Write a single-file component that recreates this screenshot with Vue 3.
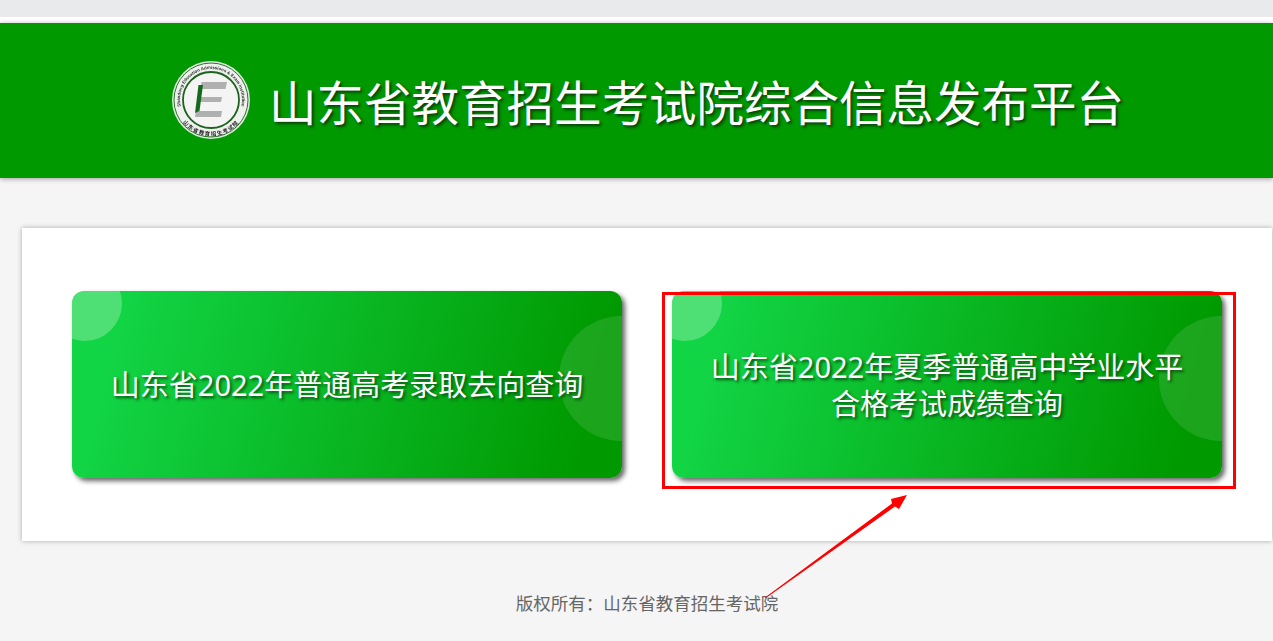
<script setup>
const title = '山东省教育招生考试院综合信息发布平台'
const links = [
  { id: 1, lines: ['山东省2022年普通高考录取去向查询'] },
  { id: 2, lines: ['山东省2022年夏季普通高中学业水平', '合格考试成绩查询'] }
]
</script>

<template>
  <div class="page">
    <div class="topstrip"></div>
    <div class="topgap"></div>
    <header class="banner">
      <svg class="logo" viewBox="0 0 80 80" width="80" height="80" aria-hidden="true">
        <defs>
          <path id="arcTop" d="M 13.2 55.5 A 31 31 0 1 1 66.8 55.5" />
          <path id="arcBottom" d="M 10.5 60.6 A 36 36 0 0 0 69.5 60.6" />
          <filter id="soft" x="-5%" y="-5%" width="110%" height="110%">
            <feGaussianBlur stdDeviation="0.35" />
          </filter>
        </defs>
        <g filter="url(#soft)">
          <circle cx="40" cy="40" r="39" fill="#dfe8df" />
          <circle cx="40" cy="40" r="37" fill="#eef1ee" stroke="#2f752f" stroke-width="1" />
          <circle cx="40" cy="40" r="28" fill="#f4f4f4" stroke="#1a631a" stroke-width="1.8" />
          <text class="ring-en"><textPath href="#arcTop" startOffset="50%" text-anchor="middle">Shandong Education Admissions &amp; Exam Institution</textPath></text>
          <text class="ring-cn"><textPath href="#arcBottom" startOffset="50%" text-anchor="middle">山东省教育招生考试院</textPath></text>
          <polygon points="30.5,22 56,22 54.5,29 29.5,29" fill="#b0b0b0" />
          <polygon points="27.5,37 51,37 50,42 27,42" fill="#b0b0b0" />
          <polygon points="25,51 51,51 50,57 24,57" fill="#b0b0b0" />
          <polygon points="27.5,25 32,25 28.5,51 24,53" fill="#17681f" />
        </g>
      </svg>
      <h1 class="title">{{ title }}</h1>
    </header>

    <main class="panel">
      <a v-for="link in links" :key="link.id" class="tile">
        <span class="bubble-a"></span>
        <span class="bubble-b"></span>
        <span class="tile-text">
          <span v-for="line in link.lines" :key="line" class="tile-line">{{ line }}</span>
        </span>
      </a>
    </main>

    <footer class="foot">版权所有：山东省教育招生考试院</footer>

    <div class="mark-box"></div>
    <svg class="mark-arrow" width="1273" height="641" aria-hidden="true">
      <polygon points="765,597.5 892,503.5 891,499 907,495 899,509 895,506.5 766,598" fill="#ff0000" />
    </svg>
  </div>
</template>

<style>
html, body { margin: 0; background: #f5f5f5; overflow: hidden; }
</style>

<style scoped>
.page {
  position: relative;
  width: 1273px;
  height: 641px;
  overflow: hidden;
  background: #f5f5f5;
  font-family: "Noto Sans CJK SC", "Noto Sans", sans-serif;
}
.topstrip { height: 17px; background: #e9eaec; }
.topgap { height: 6px; background: #fff; }
.banner {
  height: 155px;
  display: flex;
  align-items: center;
  padding-left: 171px;
  background: #009900;
  box-shadow: 0 1px 5px rgba(0, 0, 0, .35);
}
.logo { flex: none; margin-top: -2px; }
.ring-en { font: 700 4.4px "Liberation Sans", sans-serif; fill: #2e2e2e; }
.ring-cn { font: 700 5.4px "Noto Sans CJK SC", sans-serif; letter-spacing: 1px; fill: #222; }
.title {
  margin: 0 0 0 18px;
  font-size: 47.5px;
  line-height: 1.2;
  font-weight: 400;
  color: #fff;
  white-space: nowrap;
  text-shadow: 2px 2px 3px #0b3d0b;
}
.panel {
  width: 1250px;
  height: 313px;
  margin: 50px 0 0 22px;
  box-sizing: border-box;
  padding: 63px 50px 0;
  display: flex;
  gap: 50px;
  background: #fff;
  box-shadow: 0 0 5px rgba(0, 0, 0, .3);
}
.tile {
  position: relative;
  flex: none;
  width: 550px;
  height: 187px;
  border-radius: 12px;
  overflow: hidden;
  display: flex;
  align-items: center;
  justify-content: center;
  background: linear-gradient(105deg, #12d546 8%, #009900 92%);
  box-shadow: 3px 3px 5px #666;
}
.bubble-a {
  position: absolute;
  left: -25px;
  top: -25px;
  width: 75px;
  height: 75px;
  border-radius: 50%;
  background: rgba(255, 255, 255, .26);
}
.bubble-b {
  position: absolute;
  right: -62px;
  top: 25px;
  width: 125px;
  height: 125px;
  border-radius: 50%;
  background: rgba(255, 255, 255, .11);
}
.tile-text {
  position: relative;
  display: flex;
  flex-direction: column;
  align-items: center;
  color: #fff;
  font-family: "Noto Sans", "Noto Sans CJK SC", sans-serif;
  font-size: 29px;
  line-height: 37px;
  text-shadow: 2px 2px 3px #0a5014;
}
.tile-line { display: block; white-space: nowrap; }
.foot {
  margin-top: 49px;
  padding-left: 21px;
  text-align: center;
  font-size: 17.5px;
  line-height: 26px;
  color: #666;
}
.mark-box {
  position: absolute;
  left: 662px;
  top: 292px;
  width: 568px;
  height: 191px;
  border: 3px solid #ff0000;
}
.mark-arrow { position: absolute; left: 0; top: 0; pointer-events: none; }
</style>
